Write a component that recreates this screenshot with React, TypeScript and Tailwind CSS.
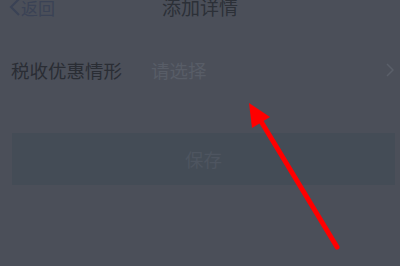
import React from "react";

export default function App() {
  const font = { fontFamily: '"Noto Sans CJK SC", "Noto Sans", sans-serif' };
  return (
    <div className="relative w-[400px] h-[266px] overflow-hidden bg-[#4b4f59]" style={font}>
      <div className="relative h-[15px] flex items-center">
        <div className="flex items-center pl-[9px] text-[#3a4255] text-[17px] leading-none">
          <svg width="12" height="18" viewBox="0 0 12 18" className="mr-[0px] mt-[-2px]">
            <path d="M10 1 L2 9 L10 17" fill="none" stroke="#3a4255" strokeWidth="2" />
          </svg>
          <span>返回</span>
        </div>
        <div className="absolute left-0 right-0 top-[-3px] text-center text-[19px] leading-[20px] text-[#2c3037]">
          添加详情
        </div>
      </div>
      <div className="mt-[43px] h-[24px] flex items-center pl-[11px] pr-[6px]">
        <span className="w-[140px] text-[18.5px] text-[#2a2d34] leading-none">税收优惠情形</span>
        <span className="text-[18.5px] text-[#585d67] leading-none">请选择</span>
        <svg width="8" height="14" viewBox="0 0 8 14" className="ml-auto">
          <path d="M1 1 L7 7 L1 13" fill="none" stroke="#5a5f69" strokeWidth="1.5" />
        </svg>
      </div>
      <div className="ml-[12px] mr-[5px] mt-[51px] h-[52px] bg-[#444c56] flex items-center justify-center">
        <span className="text-[18.5px] text-[#4e5560] leading-none">保存</span>
      </div>
      <svg className="absolute left-0 top-0" width="400" height="266" viewBox="0 0 400 266">
        <line x1="337" y1="247" x2="259" y2="118" stroke="#ff0000" strokeWidth="5" strokeLinecap="round" />
        <polygon points="249,103 270,117 252,128" fill="#ff0000" />
      </svg>
    </div>
  );
}
